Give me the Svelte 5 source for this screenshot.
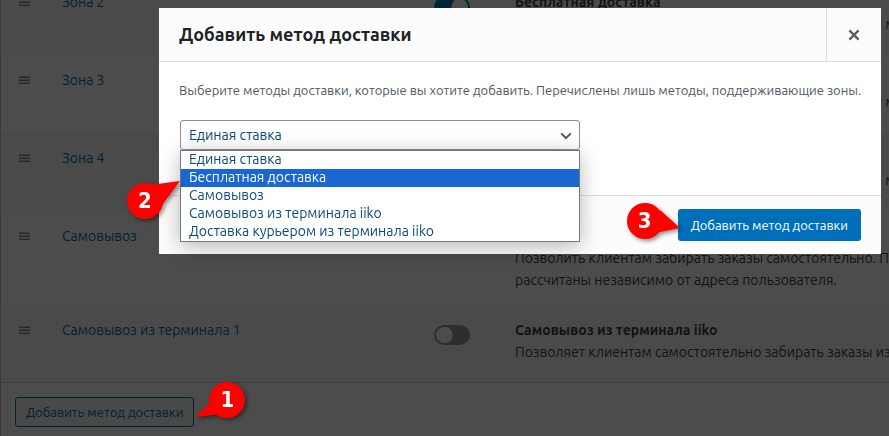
<script>
  const freeDelivery = 'Бесплатная доставка - это специальный метод, который может';

  const zones = [
    { name: 'Зона 2', enabled: true, title: 'Бесплатная доставка', lines: [freeDelivery] },
    { name: 'Зона 3', enabled: true, title: 'Бесплатная доставка', lines: [freeDelivery] },
    { name: 'Зона 4', enabled: true, title: 'Бесплатная доставка', lines: [freeDelivery] },
    {
      name: 'Самовывоз',
      enabled: true,
      title: 'Самовывоз',
      lines: [
        'Позволить клиентам забирать заказы самостоятельно. При самовывозе налоги будут',
        'рассчитаны независимо от адреса пользователя.'
      ]
    },
    {
      name: 'Самовывоз из терминала 1',
      enabled: false,
      title: 'Самовывоз из терминала iiko',
      lines: ['Позволяет клиентам самостоятельно забирать заказы из терминала']
    }
  ];

  const methods = [
    'Единая ставка',
    'Бесплатная доставка',
    'Самовывоз',
    'Самовывоз из терминала iiko',
    'Доставка курьером из терминала iiko'
  ];

  let selected = $state(methods[0]);
  let active = $state(1);
</script>

{#snippet pin(number, kind)}
  <span class="pin {kind}">
    <svg viewBox="-36 -28 72 56" width="72" height="56" aria-hidden="true">
      <circle r="18" fill="#fe0000" />
      {#if kind === 'pin-add'}
        <path d="M-17 3 L-32 17 L-4 14 Z" fill="#fe0000" />
      {:else if kind === 'pin-list'}
        <path d="M5 -16 L35 -20 L17 4 Z" fill="#fe0000" />
      {:else}
        <path d="M15 -11 L35 7 L10 12 Z" fill="#fe0000" />
      {/if}
    </svg>
    <b>{number}</b>
  </span>
{/snippet}

<main class="page">
  <table>
    <tbody>
      {#each zones as zone}
        <tr>
          <td class="sort">
            <svg viewBox="0 0 11 8" width="11" height="8" aria-hidden="true">
              <path d="M0 .5H11M0 3.5H11M0 6.5H11" stroke="#c4c4c4" />
              <path d="M0 1.5H11M0 4.5H11M0 7.5H11" stroke="#8a8a8a" />
            </svg>
          </td>
          <td class="zone"><a href="#zone">{zone.name}</a></td>
          <td class="enabled">
            <input type="checkbox" role="switch" checked={zone.enabled} aria-label={zone.title} />
          </td>
          <td class="about">
            <strong>{zone.title}</strong>
            {#each zone.lines as line}<p>{line}</p>{/each}
          </td>
        </tr>
      {/each}
    </tbody>
  </table>
  <footer class="table-foot">
    <div class="anchor">
      <button class="outline" type="button">Добавить метод доставки</button>
      {@render pin(1, 'pin-add')}
    </div>
  </footer>
</main>

<div class="overlay">
  <div class="modal" role="dialog" aria-labelledby="modal-title">
    <header>
      <h1 id="modal-title">Добавить метод доставки</h1>
      <button class="close" type="button" aria-label="Закрыть">
        <svg viewBox="0 0 12 12" width="12" height="12" aria-hidden="true">
          <path d="M1.4 1.4L10.6 10.6M10.6 1.4L1.4 10.6" stroke="#5f5f5f" stroke-width="2.4" />
        </svg>
      </button>
    </header>
    <section>
      <label for="method">
        Выберите методы доставки, которые вы хотите добавить. Перечислены лишь методы, поддерживающие зоны.
      </label>
      <div class="picker">
        <select id="method" bind:value={selected}>
          {#each methods as method}<option>{method}</option>{/each}
        </select>
        <svg class="chevron" viewBox="0 0 12 8" width="12" height="8" aria-hidden="true">
          <path d="M1.2 1.4L6 6.2L10.8 1.4" fill="none" stroke="#50575e" stroke-width="2" />
        </svg>
        <ul class="list" role="listbox" aria-label="Методы доставки">
          {#each methods as method, i}
            <li role="option" aria-selected={i === active} class:active={i === active}>{method}</li>
          {/each}
        </ul>
        {@render pin(2, 'pin-list')}
      </div>
    </section>
    <footer class="modal-foot">
      <div class="anchor">
        <button class="primary" type="button">Добавить метод доставки</button>
        {@render pin(3, 'pin-save')}
      </div>
    </footer>
  </div>
</div>

<style>
  :global(body) {
    margin: 0;
    background: #fff;
    overflow: hidden;
  }

  .page,
  .overlay {
    font-family: Ubuntu, 'Open Sans', 'Noto Sans', sans-serif;
    font-size: 14px;
    color: #3c434a;
  }

  button,
  select {
    font-family: inherit;
    box-sizing: border-box;
  }

  /* The list is scrolled a little past its first row */
  .page {
    margin-top: -24px;
    border-left: 1px solid #c3c4c7;
    overflow: hidden;
  }

  table {
    width: 100%;
    table-layout: fixed;
    border-collapse: collapse;
  }

  tr {
    height: 78px;
  }

  tr:nth-child(odd) {
    background: #f9f9f9;
  }

  td {
    box-sizing: border-box;
    padding: 15px 0 13px;
    vertical-align: top;
    line-height: 22px;
    white-space: nowrap;
  }

  .sort {
    width: 61px;
    padding-left: 18px;
  }

  .sort svg {
    display: block;
    margin-top: 7px;
  }

  .zone {
    width: 372px;
  }

  .enabled {
    width: 81px;
  }

  a {
    color: #0073aa;
    text-decoration: none;
  }

  p {
    margin: 0;
  }

  strong {
    display: block;
    font-weight: 600;
  }

  input {
    appearance: none;
    box-sizing: border-box;
    display: block;
    width: 36px;
    height: 20px;
    margin: 6px 0 0;
    border: 2px solid #999;
    border-radius: 10px;
    background: radial-gradient(circle at 8px 8px, #fff 8px, transparent 9px) #999;
  }

  input:checked {
    border-color: #007cba;
    background: radial-gradient(circle at 24px 8px, #fff 8px, transparent 9px) #007cba;
  }

  .table-foot {
    display: flex;
    padding: 14px;
    border-top: 1px solid #c3c4c7;
  }

  .anchor {
    position: relative;
  }

  .outline {
    height: 30px;
    padding: 0 10px;
    border: 1px solid #0071a1;
    border-radius: 3px;
    background: #f3f5f6;
    color: #0071a1;
    font-size: 13px;
  }

  .overlay {
    position: fixed;
    inset: 0;
    z-index: 10;
    padding: 8px 8px 0 159px;
    background: rgba(0, 0, 0, 0.7);
  }

  .modal {
    background: #fff;
  }

  header {
    display: flex;
    justify-content: space-between;
    height: 53px;
    border-bottom: 1px solid #ddd;
    background: #fcfcfc;
  }

  h1 {
    margin: 0;
    padding-left: 20px;
    color: #1d2327;
    font-size: 18px;
    font-weight: 600;
    line-height: 53px;
  }

  .close {
    display: grid;
    place-items: center;
    width: 55px;
    padding: 0;
    border: 0;
    border-left: 1px solid #ddd;
    background: none;
  }

  section {
    padding: 18px 20px 45px;
  }

  label {
    display: block;
    margin-bottom: 20px;
    color: #50575e;
    font-size: 13px;
    line-height: 20px;
    white-space: nowrap;
  }

  .picker {
    position: relative;
    width: 400px;
    margin-left: 1px;
  }

  select {
    appearance: none;
    display: block;
    width: 100%;
    height: 30px;
    padding: 0 24px 0 8px;
    border: 1px solid #8c8f94;
    border-radius: 3px;
    background: #fff;
    color: #0a4b78;
    font-size: 14px;
  }

  .chevron {
    position: absolute;
    top: 12px;
    right: 8px;
  }

  .list {
    position: absolute;
    top: 100%;
    left: 0;
    right: 0;
    margin: 0;
    padding: 0;
    border: 1px solid #767676;
    background: #fff;
    box-shadow: 0 4px 20px rgba(0, 0, 0, 0.28);
    color: #0a4b78;
    list-style: none;
  }

  li {
    height: 18px;
    padding-left: 8px;
    line-height: 16px;
  }

  .active {
    background: #1967d2;
    color: #fff;
  }

  .modal-foot {
    display: flex;
    justify-content: flex-end;
    padding: 13px 20px;
    border-top: 1px solid #ddd;
    background: #fcfcfc;
  }

  .primary {
    height: 32px;
    padding: 0 13px;
    border: 0;
    border-radius: 3px;
    background: #006fb9;
    color: #fff;
    font-size: 13px;
  }

  /* Numbered step markers, centred on their circle */
  .pin {
    position: absolute;
    z-index: 20;
    display: grid;
    place-items: center;
    width: 72px;
    height: 56px;
    color: #fff;
    font: 22px/28px 'DejaVu Sans Condensed', 'DejaVu Sans', sans-serif;
    filter: drop-shadow(2px 2px 2px rgba(0, 0, 0, 0.45));
  }

  .pin > :global(*) {
    grid-area: 1 / 1;
  }

  .pin-add {
    right: -69px;
    top: -25px;
  }

  .pin-list {
    left: -71px;
    top: 53px;
  }

  .pin-save {
    left: -69px;
    top: -16px;
  }
</style>
